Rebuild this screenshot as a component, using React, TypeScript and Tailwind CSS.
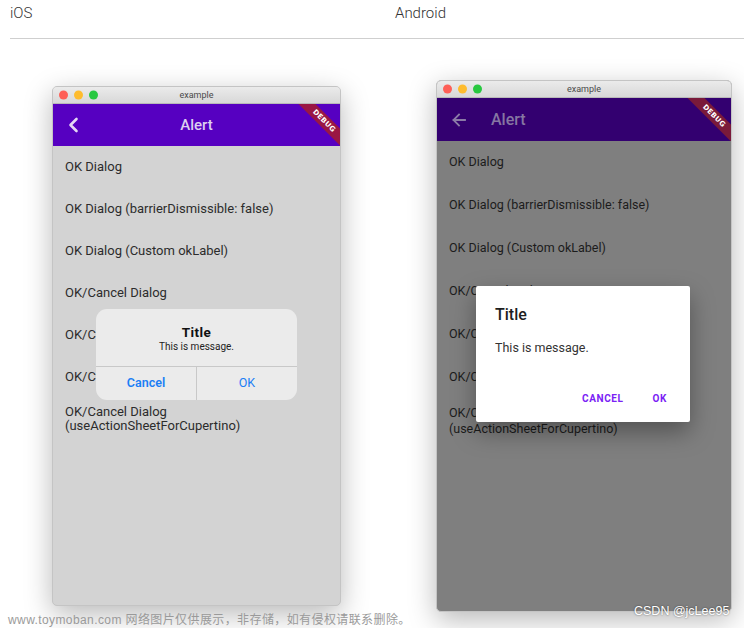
import React from "react";

const items = [
  "OK Dialog",
  "OK Dialog (barrierDismissible: false)",
  "OK Dialog (Custom okLabel)",
  "OK/Cancel Dialog",
  "OK/Cancel Dialog (Destructive)",
  "OK/Cancel Dialog (Custom)",
];

function TrafficLights() {
  return (
    <div className="absolute left-[6px] top-1/2 -translate-y-1/2 flex gap-[6px]">
      <div className="w-[9px] h-[9px] rounded-full bg-[#fe5f57]" />
      <div className="w-[9px] h-[9px] rounded-full bg-[#febc2e]" />
      <div className="w-[9px] h-[9px] rounded-full bg-[#28c840]" />
    </div>
  );
}

function TitleBar() {
  return (
    <div className="relative h-[17px] bg-gradient-to-b from-[#ebebeb] to-[#d8d8d8] border-b border-[#b9b9b9] flex items-center justify-center">
      <TrafficLights />
      <span className="text-[9px] text-[#4a4a4a] font-['Roboto',sans-serif] leading-none">example</span>
    </div>
  );
}

function DebugBanner({ left, top, color }: { left: number; top: number; color: string }) {
  return (
    <div
      className="absolute w-[80px] h-[12px] rotate-45 flex items-center justify-center"
      style={{ left, top, background: color }}
    >
      <span className="text-[7px] font-bold text-white tracking-[0.3px] leading-none font-['DejaVu_Sans',sans-serif]">DEBUG</span>
    </div>
  );
}

function IOSWindow() {
  return (
    <div className="relative w-[289px] h-[520px] rounded-[5px] overflow-hidden border border-[#c4c4c4] bg-[#d3d3d3] shadow-[0_8px_28px_rgba(0,0,0,0.28)]">
      <TitleBar />
      <div className="relative h-[42px] bg-[#5600c1] overflow-hidden flex items-center justify-center">
        <svg className="absolute left-[14px] top-[13px]" width="14" height="16" viewBox="0 0 14 16">
          <polyline points="9.5,2 3.5,8 9.5,14" fill="none" stroke="#e4d8f4" strokeWidth="2.6" strokeLinecap="round" strokeLinejoin="round" />
        </svg>
        <span className="text-[15px] font-medium text-[#dccff0] font-['Roboto',sans-serif]">Alert</span>
        <DebugBanner left={231} top={11} color="#9a1744" />
      </div>
      <div className="font-['Roboto',sans-serif] text-[13px] text-[#2c2c2c]">
        {items.map((t) => (
          <div key={t} className="h-[42px] flex items-center pl-[12px] whitespace-nowrap">
            {t}
          </div>
        ))}
        <div className="pl-[12px] pt-[7px] leading-[14px]">
          OK/Cancel Dialog
          <br />
          (useActionSheetForCupertino)
        </div>
      </div>
      <div className="absolute left-[43px] top-[222px] w-[201px] h-[91px] rounded-[11px] bg-[#ebebeb] flex flex-col font-['Roboto',sans-serif] overflow-hidden">
        <div className="h-[57px] flex flex-col items-center pt-[15px]">
          <div className="text-[13.5px] font-bold text-[#111] leading-[16px] tracking-[0.4px]">Title</div>
          <div className="text-[10px] text-[#222] leading-[13px]">This is message.</div>
        </div>
        <div className="flex flex-1 border-t border-[#c8c8c8]">
          <div className="flex-1 flex items-center justify-center text-[12.5px] font-semibold text-[#1b7ef5]">Cancel</div>
          <div className="w-px bg-[#c8c8c8]" />
          <div className="flex-1 flex items-center justify-center text-[12.5px] text-[#1b7ef5]">OK</div>
        </div>
      </div>
    </div>
  );
}

function AndroidWindow() {
  return (
    <div className="relative w-[296px] h-[532px] rounded-[5px] overflow-hidden border border-[#c4c4c4] bg-[#7f7f7f] shadow-[0_8px_28px_rgba(0,0,0,0.28)]">
      <TitleBar />
      <div className="relative h-[43px] bg-[#330070] overflow-hidden flex items-center">
        <svg className="absolute left-[14px] top-[14px]" width="16" height="16" viewBox="0 0 16 16">
          <path d="M14 8H2.5M8 2.5L2.5 8 8 13.5" fill="none" stroke="#8a7aa6" strokeWidth="1.8" strokeLinecap="square" />
        </svg>
        <span className="ml-[54px] text-[16px] font-medium text-[#8676a2] font-['Roboto',sans-serif]">Alert</span>
        <DebugBanner left={237} top={12} color="#7a1a3a" />
      </div>
      <div className="font-['Roboto',sans-serif] text-[12.5px] text-[#1c1c1c]">
        {items.map((t) => (
          <div key={t} className="h-[43px] flex items-center pl-[12px] whitespace-nowrap">
            {t}
          </div>
        ))}
        <div className="pl-[12px] pt-[6px] leading-[16px]">
          OK/Cancel Dialog
          <br />
          (useActionSheetForCupertino)
        </div>
      </div>
      <div className="absolute left-[39px] top-[205px] w-[214px] h-[136px] bg-white rounded-[2px] shadow-[0_10px_24px_rgba(0,0,0,0.35)] font-['Roboto',sans-serif]">
        <div className="absolute left-[19px] top-[19px] text-[16px] font-medium text-[#1e1e1e] leading-[20px]">Title</div>
        <div className="absolute left-[19px] top-[54px] text-[12.5px] text-[#333] leading-[16px]">This is message.</div>
        <div className="absolute right-[23px] top-[107px] flex gap-[29px] text-[10px] font-bold text-[#7a22f5] tracking-[0.6px] leading-[12px]">
          <span>CANCEL</span>
          <span>OK</span>
        </div>
      </div>
    </div>
  );
}

export default function App() {
  return (
    <div className="relative w-[744px] h-[628px] bg-white overflow-hidden font-['Roboto',sans-serif]">
      <div className="flex h-[38px] pt-[4px] pl-[10px] text-[15px] leading-[18px] font-light text-[#333]">
        <span className="w-[385px]">iOS</span>
        <span>Android</span>
      </div>
      <div className="ml-[10px] border-t border-[#cfcfcf]" />
      <div className="flex items-start">
        <div className="ml-[52px] mt-[47px]">
          <IOSWindow />
        </div>
        <div className="ml-[95px] mt-[41px]">
          <AndroidWindow />
        </div>
      </div>
      <div className="absolute left-[8px] top-[612px] text-[12px] text-[#9a9a9a] leading-[16px] font-['Liberation_Sans','Noto_Sans_CJK_SC',sans-serif] tracking-[0.4px]">
        www.toymoban.com 网络图片仅供展示，非存储，如有侵权请联系删除。
      </div>
      <div className="absolute left-[634px] top-[603px] text-[12.5px] text-white leading-[16px] font-['Liberation_Sans',sans-serif] [text-shadow:0_0_2px_rgba(0,0,0,0.6)]">
        CSDN @jcLee95
      </div>
    </div>
  );
}
